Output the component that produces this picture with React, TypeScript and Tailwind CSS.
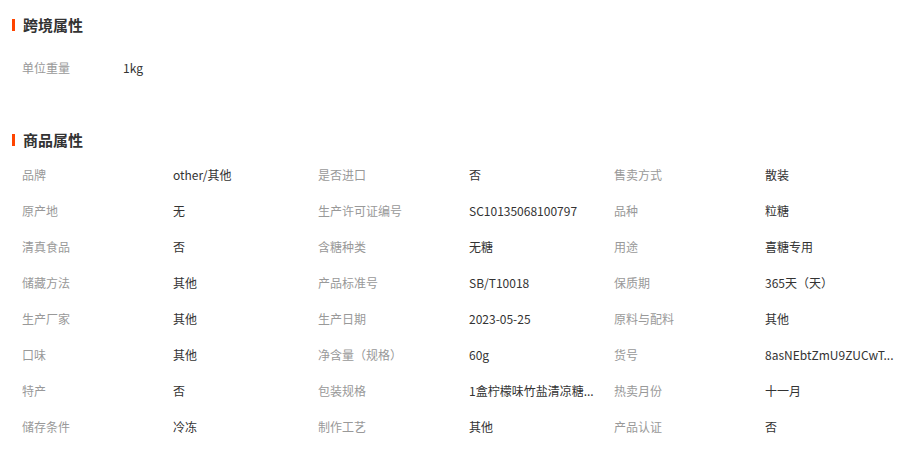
import React from "react";

const cross = [{ label: "单位重量", value: "1kg" }];

const attrs = [
  ["品牌", "other/其他"],
  ["是否进口", "否"],
  ["售卖方式", "散装"],
  ["原产地", "无"],
  ["生产许可证编号", "SC10135068100797"],
  ["品种", "粒糖"],
  ["清真食品", "否"],
  ["含糖种类", "无糖"],
  ["用途", "喜糖专用"],
  ["储藏方法", "其他"],
  ["产品标准号", "SB/T10018"],
  ["保质期", "365天（天）"],
  ["生产厂家", "其他"],
  ["生产日期", "2023-05-25"],
  ["原料与配料", "其他"],
  ["口味", "其他"],
  ["净含量（规格）", "60g"],
  ["货号", "8asNEbtZmU9ZUCwT..."],
  ["特产", "否"],
  ["包装规格", "1盒柠檬味竹盐清凉糖..."],
  ["热卖月份", "十一月"],
  ["储存条件", "冷冻"],
  ["制作工艺", "其他"],
  ["产品认证", "否"],
];

const Title = ({ text }: { text: string }) => (
  <div className="flex h-5 items-center">
    <span className="ml-3 h-3 w-[3px] bg-[#ff4400]" />
    <span className="ml-2 text-[15px] font-bold leading-5 text-[#333]">
      {text}
    </span>
  </div>
);

const Cell = ({
  label,
  value,
  labelW = "w-[151px]",
}: {
  label: string;
  value: string;
  labelW?: string;
}) => (
  <div className="flex h-9 items-center text-[12px]">
    <span className={`${labelW} shrink-0 text-[#999]`}>{label}</span>
    <span className="w-[140px] whitespace-nowrap text-[#333]">{value}</span>
  </div>
);

export default function App() {
  return (
    <div
      className="h-[453px] w-[904px] overflow-hidden bg-white"
      style={{ fontFamily: '"Noto Sans CJK SC", "Noto Sans", sans-serif' }}
    >
      <div className="pt-[15px]">
        <Title text="跨境属性" />
        <div className="mt-[15px] pl-[22px]">
          {cross.map((c) => (
            <Cell
              key={c.label}
              label={c.label}
              value={c.value}
              labelW="w-[101px]"
            />
          ))}
        </div>
      </div>

      <div className="mt-11">
        <Title text="商品属性" />
        <div className="mt-[7px] grid grid-cols-[296px_296px_296px] pl-[22px]">
          {attrs.map(([label, value]) => (
            <Cell key={label} label={label} value={value} />
          ))}
        </div>
      </div>
    </div>
  );
}
